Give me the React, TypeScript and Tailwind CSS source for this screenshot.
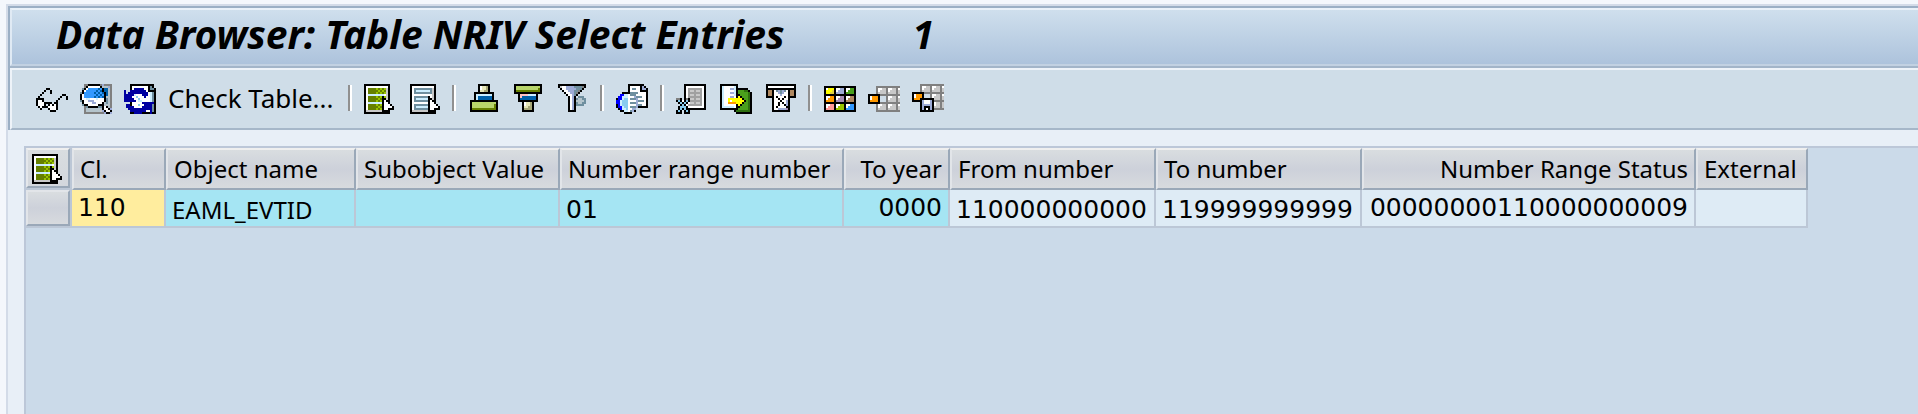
import React from "react";
import clsx from "clsx";

const palette: Record<string, string> = {
  k: "#000000",
  w: "#ffffff",
  g: "#808080",
  a: "#a0a0a0",
  G: "#c8c8c8",
  c: "#b4c4cc",
  s: "#6f8f9f",
  l: "#cceeff",
  b: "#3399ff",
  B: "#0060a8",
  n: "#0000a0",
  N: "#0000ff",
  p: "#9dabd6",
  P: "#a58bb5",
  d: "#668000",
  D: "#99c400",
  h: "#b8d56a",
  t: "#e6e6b8",
  T: "#a8a878",
  r: "#ffc0c0",
  R: "#ff9999",
  y: "#ffff00",
  Y: "#e0d040",
  o: "#ff9900",
  O: "#b08860",
  f: "#4aa01c",
  F: "#2f7010",
  L: "#88ccee",
};

// Each string is one row of a 16px wide glyph, "." is transparent
const glyphs: Record<string, string[]> = {
  glasses: [
    "",
    "",
    "",
    ".....kk.........",
    "....k..k........",
    "...k...k........",
    "..k..........kk.",
    ".k..........k..k",
    "kkkk.......k...k",
    "kwwk......k.....",
    "kwwwkkkk.kk.....",
    "kwwwk.kwkwk.....",
    ".kwkkkwwwwk.....",
    "..k...kwwwk.....",
    ".......kkk......",
  ],
  magnifier: [
    "",
    "..ggkkkkkkgpgggg",
    "..gkwwwwwwkcccpg",
    ".skwbbbbbBbkBBcg",
    ".kwbbbbbBbBkBBcg",
    "skbbbbbBbBbBkBcg",
    "kwbbbbbbBbBbkBcg",
    "kwbbbbbBbBbBkccg",
    "kwwllwwwlwwwkscg",
    "skwwpppwwwwwkscg",
    ".kwwwwppwwwkcscg",
    ".skkwwwwwkkkcccg",
    "..gskkkkksskwkcg",
    "..gcccccccckwwkp",
    "..gcccccccGpkwwk",
    "..ggggggggggpkkp",
  ],
  refresh: [
    "",
    "...kkkkkkkkkkkk.",
    "...kwwwwwwwwksk.",
    "...kwnnnnnwwkssk",
    "n..nnnnnnnnwkkkk",
    "n.nnnnnnnnnnwlsk",
    "nnnnnlwwwnnnwlsk",
    "nnnnwwLwwwnwwlsk",
    "nnnnnwwLwwwwwlsk",
    "nnnnnnwllwwwwlsk",
    "...kwwwwwnnnnnnk",
    ".nnkwwwLwwnnnnsk",
    ".nnnnwwwwnnnnnsk",
    "..nnnnnnnnnnnnsk",
    "...nnnnnnnnwwnsk",
    "...kknnnnkkkknkk",
  ],
  selectAll: [
    "",
    "kkkkkkkkkkkkk...",
    "kwwwwwwwwwwwk...",
    "kwddddDdDdDGk...",
    "kwdddddDdDdGk...",
    "kwddddDdDdDGk...",
    "kwllllllllwGk...",
    "kwddddDdDkDGk...",
    "kwdddddDdkkGk...",
    "kwddddDdDkwkk...",
    "kwlllllllkwwk...",
    "kwddddDdDkwwwk..",
    "kwdddddDdkwwwwk.",
    "kwddddDdDkwwkkk.",
    "kGGGGGGGGkkkk...",
    "kkkkkkkkkkkkk...",
  ],
  selectBlock: [
    "",
    ".kkkkkkkkkkkkk..",
    ".kwwwwwwwwwwwk..",
    ".kwsssssssssGk..",
    ".kwslllllllsGk..",
    ".kwsssssssssGk..",
    ".kwwwwwwwwwwGk..",
    ".kwssssssskwGk..",
    ".kwsllllllkkGk..",
    ".kwssssssskwkk..",
    ".kwwwwwwwwkwwk..",
    ".kwssssssskwwwk.",
    ".kwsllllllkwwwwk",
    ".kwssssssskwwkkk",
    ".kGGGGGGGGkkkk..",
    ".kkkkkkkkkkkkk..",
  ],
  sortUp: [
    "",
    ".....kkkkkk.....",
    ".....kwttTk.....",
    ".....kwttTk.....",
    ".....kttTTk.....",
    "...kkkkkkkkkk...",
    "...kllllllllk...",
    "...klBBBBBBBk...",
    "...klBBBBBBBk...",
    ".kkkkkkkkkkkkkk.",
    ".khhhhhhhhhhhhk.",
    ".khhhhhhhhhhhdk.",
    ".khhhhhhhhhhhdk.",
    ".kddddddddddddk.",
    ".kkkkkkkkkkkkkk.",
  ],
  sortDown: [
    "",
    ".kkkkkkkkkkkkkk.",
    ".khhhhhhhhhhhhk.",
    ".khhhhhhhhhhhdk.",
    ".kddddddddddddk.",
    ".kkkkkkkkkkkkkk.",
    "...krrrrllllk...",
    "...krBBBBBBBk...",
    "...kBBBBBBBBk...",
    "...kkkkkkkkkk...",
    ".....kwttTk.....",
    ".....kwttTk.....",
    ".....kttTTk.....",
    ".....kTTTTk.....",
    ".....kkkkkk.....",
  ],
  filter: [
    "",
    ".kkkkkkkkkkkkkk.",
    ".kGwwppppssssgk.",
    "..kwwpppppsssk..",
    "...kwwpppssgk...",
    "....kwwppsgk....",
    ".....kwwpsk.....",
    "......kwpk.sss..",
    "......kwpksccss.",
    "......kwpkccccs.",
    "......kwpksccss.",
    "......kwpkssss..",
    "......kwpk......",
    "......kwpk......",
    "......kkkk......",
  ],
  info: [
    "",
    "......kkkkkkkk..",
    "......kwwwwwkpk.",
    "......kwsswwkppk",
    "......kwwwwwkkkk",
    "...kkkksssswwwwk",
    "..NNllwssswwwwwk",
    ".NNlllwwwpssswwk",
    "kNNlLLwssspwwwwk",
    "NNlLLLwwwwpssswk",
    "NNlLLLwssspwwwwk",
    "kNlLLLwwwwpsswwk",
    "kNNlLLwssspkkkkk",
    ".kNllLwwpp......",
    "..kkllwspk......",
    "....kkkk........",
  ],
  spreadsheet: [
    "",
    "....kkkkkkkkkkk.",
    "....kwwwwwwwwwk.",
    "....kwaaaaaaawk.",
    "....kwaGGaGGawk.",
    "....kwaaaaaaawk.",
    "....kwaGGaGGawk.",
    "....kwaaaaaaawk.",
    "ggk.kgkGGaGGawk.",
    "kLkwkLkaaaaaawk.",
    ".kLkLkwGGaGGawk.",
    "..kLkwaaaaaaawk.",
    ".kLLLkwwwwwwwwk.",
    ".kLkLkkkkkkkkkk.",
    "kLk.kLk.........",
    "kkk.kkk.........",
  ],
  exportFile: [
    "",
    "kkkkkkkkk.......",
    "klwwwwwlk.......",
    "klwwwpplkkkkkk..",
    "klwwwwwlkfffFFk.",
    "klwwwpplkfffffFk",
    "klwwwwwlkkffffFk",
    "klwwwppwkykfffFk",
    "klwwyyyyyyykffFk",
    "klwwywyyyyyykfFk",
    "klwwooooyyykffFk",
    "klwwwwwwkykfffFk",
    "kllllllwkkffffFk",
    "kkkkkkkkkfffffFk",
    ".......kFFFFFFFk",
    "........kkkkkkkk",
  ],
  mail: [
    "",
    ".kkkkkkkkkkkkkkk",
    ".kwwwwwwwwwwwwwk",
    ".kkkkkkkkkkkkkkk",
    ".kOOkwspspswkOOk",
    ".kOOkwwpspwwkOOk",
    ".kOOkwwwpwwwkOOk",
    ".kkkkwkwwwkwkkkk",
    "....kwwkwkwwk...",
    "....kwwwkwwpk...",
    "....kwwkwkwpk...",
    "....kwwkwwkpk...",
    "....kwkwwwwkk...",
    "....kwwppppPk...",
    "....kkkkkkkkk...",
  ],
  chooseLayout: [
    "",
    "",
    "kkkkkkkkkkkkkkkk",
    "kwyyykwwppkwwffk",
    "kyyyYkwpppkwfffk",
    "kyyYYkppppkffffk",
    "kkkkkkkkkkkkkkkk",
    "kwwookwwPPkwwOOk",
    "kwoookwPPPkwOOOk",
    "kooookPPPPkOOOOk",
    "kkkkkkkkkkkkkkkk",
    "kwwRRkwwDDkwwbbk",
    "kwRRRkwDDDkwbbbk",
    "kRRRRkDDDDkbbbbk",
    "kkkkkkkkkkkkkkkk",
  ],
  changeLayout: [
    "",
    "",
    "....gggggggggggg",
    "....gwwGGgwwGGgw",
    "....gwGGGgwGGGgG",
    "....gGGGGgGGGGgG",
    "kkkkkkgggggggggg",
    "kwoook...gwwGGgw",
    "kwoook...gwGGGgG",
    "kooook...gGGGGgG",
    "kkkkkkgggggggggg",
    "....gwwGGgwwGGgw",
    "....gwGGGgwGGGgG",
    "....gGGGGgGGGGgG",
    "....gggggggggggg",
  ],
  saveLayout: [
    "",
    "....gggggggggggg",
    "....gwwGGgwwGGgw",
    "....gwGGGgwGGGgG",
    "....gGGGGgGGGGgG",
    "kkkkkkgggggggggg",
    "kwoook...gwwGGgw",
    "kwoook...gwGGGgG",
    "koookkkkkkkGGGgG",
    "kkkkkpwwwpkggggg",
    "....kpwwwpkwGGgG",
    "....kpppppkwGGgG",
    "....kpkkkpkGGGgG",
    "....kpkwkpkggggg",
    "....kkkkkkk.....",
  ],
};

function Glyph({ name }: { name: string }) {
  const paths: Record<string, string> = {};
  glyphs[name].forEach((row, y) => {
    row.split("").forEach((char, x) => {
      if (char === ".") return;
      paths[char] = (paths[char] || "") + `M${x} ${y}h1v1h-1z`;
    });
  });

  return (
    <svg
      viewBox="0 0 16 16"
      className="h-8 w-8"
      shapeRendering="crispEdges"
      aria-hidden="true"
    >
      {Object.entries(paths).map(([char, d]) => (
        <path key={char} d={d} fill={palette[char]} />
      ))}
    </svg>
  );
}

const toolbarGroups = [
  [
    { icon: "selectAll", label: "Select all" },
    { icon: "selectBlock", label: "Select block" },
  ],
  [
    { icon: "sortUp", label: "Sort ascending" },
    { icon: "sortDown", label: "Sort descending" },
    { icon: "filter", label: "Set filter" },
  ],
  [{ icon: "info", label: "Details" }],
  [
    { icon: "spreadsheet", label: "Spreadsheet" },
    { icon: "exportFile", label: "Local file" },
    { icon: "mail", label: "Mail recipient" },
  ],
  [
    { icon: "chooseLayout", label: "Choose layout" },
    { icon: "changeLayout", label: "Change layout" },
    { icon: "saveLayout", label: "Save layout" },
  ],
];

function ToolButton({ icon, label }: { icon: string; label: string }) {
  return (
    <button type="button" aria-label={label} title={label} className="shrink-0">
      <Glyph name={icon} />
    </button>
  );
}

function Toolbar() {
  return (
    <div
      role="toolbar"
      className="flex h-[62px] items-center gap-3 border-t-2 border-b-2 border-l-2 border-t-[#eef3f9] border-b-[#a6b7c9] border-l-[#eef3f9] bg-[#cfdde8] pb-0.5 pl-6"
    >
      <ToolButton icon="glasses" label="Display" />
      <ToolButton icon="magnifier" label="Check entries" />
      <ToolButton icon="refresh" label="Refresh" />
      <button
        type="button"
        className="w-[168px] shrink-0 text-left text-[26px] leading-8 whitespace-nowrap"
      >
        Check Table...
      </button>
      {toolbarGroups.map((group, index) => (
        <React.Fragment key={index}>
          <span className="h-[26px] w-1 shrink-0 border-r-2 border-white bg-[#909090]" />
          {group.map((item) => (
            <ToolButton key={item.icon} {...item} />
          ))}
        </React.Fragment>
      ))}
    </div>
  );
}

const columns = [
  { title: "Cl.", value: "110", width: "w-[94px]", tone: "bg-[#ffed9e]", digits: true, raised: true },
  { title: "Object name", value: "EAML_EVTID", width: "w-[190px]", tone: "bg-[#a5e5f3]" },
  { title: "Subobject Value", value: "", width: "w-[204px]", tone: "bg-[#a5e5f3]" },
  { title: "Number range number", value: "01", width: "w-[284px]", tone: "bg-[#a5e5f3]", digits: true },
  { title: "To year", value: "0000", width: "w-[106px]", tone: "bg-[#a5e5f3]", digits: true, raised: true, right: true },
  { title: "From number", value: "110000000000", width: "w-[206px]", tone: "bg-[#deebf5]", digits: true },
  { title: "To number", value: "119999999999", width: "w-[206px]", tone: "bg-[#deebf5]", digits: true },
  { title: "Number Range Status", value: "00000000110000000009", width: "w-[334px]", tone: "bg-[#deebf5]", digits: true, raised: true, right: true },
  { title: "External", value: "", width: "w-[112px]", tone: "bg-[#deebf5]" },
];

function EntriesTable() {
  return (
    <table className="w-[1782px] table-fixed border-separate border-spacing-0">
      <colgroup>
        <col className="w-[46px]" />
        {columns.map((column) => (
          <col key={column.title} className={column.width} />
        ))}
      </colgroup>
      <thead>
        <tr className="h-[42px]">
          <th className="border-r-2 border-b-2 border-[#bcc7d6] p-0">
            <button
              type="button"
              aria-label="Select all rows"
              className="flex h-10 w-full items-center border-2 border-t-[#efefef] border-r-[#9aa8b8] border-b-[#9aa8b8] border-l-[#e4e7eb] bg-linear-to-b from-[#d9dde0] to-[#d3d7dd] pl-1"
            >
              <Glyph name="selectAll" />
            </button>
          </th>
          {columns.map((column) => (
            <th
              key={column.title}
              className={clsx(
                "border-2 border-t-[#efefef] border-r-[#9aa8b8] border-b-[#9aa8b8] border-l-[#e2e5e9] bg-linear-to-b from-[#d9dde0] via-[#cdd1da] to-[#d7dade] px-1.5 py-0 leading-9 font-normal whitespace-nowrap",
                column.right ? "text-right" : "text-left"
              )}
            >
              {column.title}
            </th>
          ))}
        </tr>
      </thead>
      <tbody>
        <tr className="h-[38px]">
          <td className="border-r-2 border-b-2 border-[#bcc7d6] p-0">
            <button
              type="button"
              aria-label="Select row 1"
              className="block h-9 w-full border-2 border-t-[#e2e5e9] border-r-[#9aa8b8] border-b-[#9aa8b8] border-l-[#e2e5e9] bg-linear-to-b from-[#d9dde0] via-[#cdd1da] to-[#d7dade]"
            />
          </td>
          {columns.map((column) => (
            <td
              key={column.title}
              className={clsx(
                "border-r-2 border-b-2 border-[#bcc7d6] px-1.5 pb-0 leading-8 whitespace-nowrap",
                column.tone,
                column.raised ? "pt-0" : "pt-1",
                column.right ? "text-right" : "text-left",
                column.digits && "font-['DejaVu_Sans',sans-serif] text-[25px]"
              )}
            >
              {column.value}
            </td>
          ))}
        </tr>
      </tbody>
    </table>
  );
}

export default function App() {
  return (
    <div className="flex min-h-screen flex-col overflow-hidden bg-[#f4f7fc] pt-1 pl-1.5 font-['Noto_Sans',sans-serif] text-2xl text-black">
      <div className="flex flex-1 flex-col border-t-2 border-l-2 border-[#d3dbe8] bg-[#e8eff7]">
        <div className="border-t-2 border-l-2 border-[#9bafc5]">
          <header className="flex h-[58px] items-center border-t-2 border-b-2 border-l-2 border-t-[#e9f1f9] border-b-[#c2d1e2] border-l-[#e0eaf4] bg-linear-to-b from-[#cfdfed] to-[#adc3dc] pb-1.5 pl-11">
            <h1 className="text-[39px] leading-12 font-bold whitespace-nowrap italic">
              Data Browser: Table NRIV Select Entries
              <span className="ml-32">1</span>
            </h1>
          </header>
          <div className="border-t-2 border-[#a3b5c9]">
            <Toolbar />
          </div>
        </div>
        <main className="mt-4 ml-4 flex-1 border-t-2 border-l-2 border-[#bcc7d8] bg-[#cbdae9]">
          <EntriesTable />
        </main>
      </div>
    </div>
  );
}
